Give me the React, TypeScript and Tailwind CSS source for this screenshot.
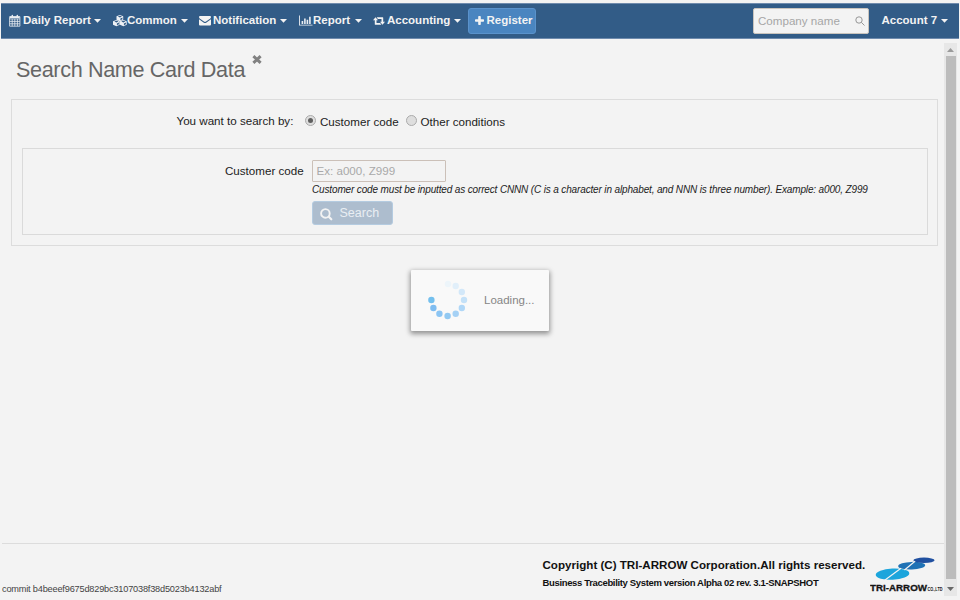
import React from "react";

type Shape = { className?: string };

function Caret({ className = "" }: Shape) {
  return (
    <svg className={className} width="7" height="4" viewBox="0 0 7 4" fill="#f3f3f3">
      <path d="M0 0h7L3.5 3.8z" />
    </svg>
  );
}

function CalendarIcon() {
  return (
    <svg width="12" height="13" viewBox="0 0 12 13" fill="none" stroke="#e9edf2" strokeWidth="0.8">
      <path d="M.6 2.6h10.3v9.6H.6zM.6 4.9h10.3M.6 7.4h10.3M.6 9.8h10.3M3.2 4.9v7.3M5.8 4.9v7.3M8.4 4.9v7.3" />
      <path d="M1 3.2h9.6" strokeWidth="1.6" />
      <path d="M3.3 1.4v1.8M8.3 1.4v1.8" strokeWidth="1.5" strokeLinecap="round" />
    </svg>
  );
}

function Cube({ x, y }: { x: number; y: number }) {
  return (
    <g transform={`translate(${x} ${y})`}>
      <path d="M3.4 0L6.7 1.3v3.4L3.4 6.2 0 4.7V1.3z" fill="#eef1f5" />
      <path d="M1.3 1.6l2.1-.8 2.1.8-2.1.8zM3.9 3.5l2-.9v1.7l-2 .9z" fill="#325c87" />
    </g>
  );
}

function CubesIcon() {
  return (
    <svg width="14" height="13" viewBox="0 0 14 13">
      <Cube x={3.5} y={1} />
      <Cube x={0} y={6} />
      <Cube x={7} y={6} />
    </svg>
  );
}

function EnvelopeIcon() {
  return (
    <svg className="mt-px" width="12" height="10" viewBox="0 0 12 10" fill="#f3f3f3">
      <path d="M0 1Q0 0 1 0h10q1 0 1 1 0 1-1 1.8L7 5.6q-1 .7-2 0L1 2.8Q0 2 0 1z" />
      <path d="M0 3.2L4.5 6.4q1.5 1 3 0L12 3.2V8.4q0 1.1-1 1.1H1q-1 0-1-1.1z" />
    </svg>
  );
}

function ChartIcon() {
  return (
    <svg className="mt-px" width="14" height="12" viewBox="0 0 14 12" fill="#e9edf2">
      <path d="M0 .5h.9v9.2H13.5v.9H0z" />
      <path d="M2.6 6h1.6v3.1H2.6zM5.1 3.4h1.6v5.7H5.1zM7.6 4.8h1.6v4.3H7.6zM10.1 1.8h1.6v7.3h-1.6z" />
    </svg>
  );
}

function RetweetIcon() {
  return (
    <svg className="mt-px" width="12" height="8" viewBox="0 0 12 8" fill="#f3f3f3">
      <path d="M2.5 0.2L5 3.2H3.5v2.7h3.6L8.4 7.7H2.3q-.5 0-.5-.5v-4H0z" />
      <path d="M9.5 7.7L7 4.7h1.5V2H4.9L3.6.2h6.1q.5 0 .5.5v4H12z" />
    </svg>
  );
}

function PlusIcon() {
  return (
    <svg width="9" height="9" viewBox="0 0 9 9" fill="#f3f3f3">
      <path d="M3.2.7q0-.7.7-.7h1.2q.7 0 .7.7v2.5h2.5q.7 0 .7.7v1.2q0 .7-.7.7H5.8v2.5q0 .7-.7.7H3.9q-.7 0-.7-.7V5.8H.7Q0 5.8 0 5.1V3.9q0-.7.7-.7h2.5z" />
    </svg>
  );
}

type ItemProps = {
  icon: React.ReactNode;
  label: string;
  width: string;
  iconWidth: string;
  labelWidth: string;
};

function NavItem({ icon, label, width, iconWidth, labelWidth }: ItemProps) {
  return (
    <div className={`flex items-center ${width}`}>
      <span className={`shrink-0 ${iconWidth}`}>{icon}</span>
      <span className={`shrink-0 whitespace-nowrap ${labelWidth}`}>{label}</span>
      <Caret />
    </div>
  );
}

function Header() {
  return (
    <header className="mx-px mt-[3px] flex h-9 items-center border-y border-[#6f8bad] bg-[#325c87] pb-px pl-2 text-[11.5px] font-bold text-[#f3f3f3]">
      <NavItem icon={<CalendarIcon />} label="Daily Report" width="w-[104px]" iconWidth="w-[14px]" labelWidth="w-[71px]" />
      <NavItem icon={<CubesIcon />} label="Common" width="w-[86px]" iconWidth="w-[14px]" labelWidth="w-[54px]" />
      <NavItem icon={<EnvelopeIcon />} label="Notification" width="w-[100px]" iconWidth="w-[14px]" labelWidth="w-[67px]" />
      <NavItem icon={<ChartIcon />} label="Report" width="w-[74px]" iconWidth="w-[14px]" labelWidth="w-[42px]" />
      <NavItem icon={<RetweetIcon />} label="Accounting" width="w-[95px]" iconWidth="w-[14px]" labelWidth="w-[67px]" />
      <button className="mt-px flex h-[26px] w-[68px] items-center gap-[3px] rounded-[3px] border border-[#5a92cb] bg-[#4a85c0] pl-[5.5px] pb-px">
        <PlusIcon />
        <span>Register</span>
      </button>
      <div className="mt-px ml-[217px] flex h-[26px] w-[115.5px] items-center justify-between rounded-[2px] border border-[#c9c4bd] bg-[#f3f3f3] pr-[3px] pl-1 text-[11.6px] font-normal text-[#a6a6a6]">
        <span>Company name</span>
        <svg width="10" height="10" viewBox="0 0 10 10" fill="none" stroke="#8c8c8c" strokeWidth="0.9">
          <circle cx="4" cy="4" r="3.2" />
          <path d="M6.4 6.4L9.5 9.5" />
        </svg>
      </div>
      <span className="ml-[13px] w-[59.5px] whitespace-nowrap">Account 7</span>
      <Caret />
    </header>
  );
}

function Radio({ checked }: { checked?: boolean }) {
  return (
    <span className="mb-[3px] flex size-[11px] shrink-0 items-center justify-center rounded-full border border-[#ababab] bg-[#dedede]">
      {checked && <span className="size-[5px] rounded-full bg-[#5f5f5f]" />}
    </span>
  );
}

function SearchPanel() {
  return (
    <section className="mt-[15px] ml-[11px] h-[147px] w-[927px] border border-[#dcdcdc] px-[10px] text-[11.6px] text-[#222]">
      <div className="flex h-[48px] items-center pb-[5px]">
        <span className="mb-px ml-[154.5px] w-[128.5px] whitespace-nowrap">You want to search by:</span>
        <Radio checked />
        <span className="mt-px ml-[4px] w-[86px] whitespace-nowrap">Customer code</span>
        <Radio />
        <span className="mt-px ml-[3.5px] whitespace-nowrap">Other conditions</span>
      </div>
      <div className="h-[87px] w-[906px] border border-[#dadada] pt-[11px]">
        <div className="flex h-[22px] items-center">
          <span className="ml-[202px] w-[87px] whitespace-nowrap">Customer code</span>
          <div className="flex h-[22px] w-[134px] items-center rounded-[1px] border border-[#cbc0b8] pl-[3.5px] text-[#a9a9a9]">
            Ex: a000, Z999
          </div>
        </div>
        <p className="ml-[289px] h-[19px] pt-px text-[10px] leading-[13px] tracking-[-0.145px] whitespace-nowrap italic">
          Customer code must be inputted as correct CNNN (C is a character in alphabet, and NNN is three number). Example: a000, Z999
        </p>
        <button className="ml-[289px] flex h-6 w-[81px] items-center rounded-[3px] border border-[#b4cbe0] bg-[#adbdce] pl-[7px] text-[12.5px] text-[#e9eef3]">
          <svg className="mt-0.5 mr-[6.5px]" width="13" height="13" viewBox="0 0 13 13" fill="none" stroke="#f3f3f3">
            <circle cx="5.4" cy="5.4" r="4.3" strokeWidth="1.9" />
            <path d="M8.8 8.8l2.5 2.5" strokeWidth="2.2" strokeLinecap="round" />
          </svg>
          Search
        </button>
      </div>
    </section>
  );
}

const DOTS: [number, number, string][] = [
  [4.4, 20, "#74c0ee"],
  [6.4, 28, "#7fbdf1"],
  [12.4, 33.8, "#8cc5f3"],
  [20.6, 36, "#92c9f2"],
  [28.7, 33.8, "#a5d1f5"],
  [34.8, 28, "#b0d7f7"],
  [37, 20, "#c4e1f8"],
  [34.8, 12, "#d3e8f9"],
  [28.7, 6, "#e1effa"],
  [21, 4, "#edf5fa"],
];

function LoadingBox() {
  return (
    <div className="absolute top-[270px] left-[411px] flex h-[61px] w-[138px] items-center rounded-[1px] bg-[#f9f9f9] pl-4 text-[11.5px] text-[#868686] shadow-[0_2px_5px_1px_rgba(0,0,0,0.4)]">
      <svg className="shrink-0" width="41" height="41" viewBox="0 0 41 41">
        {DOTS.map(([x, y, fill]) => (
          <circle key={`${x}-${y}`} cx={x} cy={y} r="3.2" fill={fill} />
        ))}
      </svg>
      <span className="ml-4">Loading...</span>
    </div>
  );
}

function Logo() {
  return (
    <svg width="74" height="38" viewBox="0 0 74 38">
      <ellipse cx="22.5" cy="18.2" rx="16.8" ry="5.6" fill="#1ca5dc" transform="rotate(-3 22.5 18.2)" />
      <ellipse cx="41.7" cy="9.7" rx="13.5" ry="3.8" fill="#1f72b5" transform="rotate(-2 41.7 9.7)" />
      <ellipse cx="54" cy="4.3" rx="10.6" ry="2.7" fill="#2050a0" />
      <path d="M14 24.8L31 12.2M34.5 14L45 5.2" stroke="#f3f3f3" strokeWidth="1.2" />
      <text x="0" y="34.5" fontSize="9.6" fontWeight="bold" fontFamily="Liberation Sans, sans-serif" textLength="57" lengthAdjust="spacingAndGlyphs" fill="#151515" stroke="#151515" strokeWidth="0.3">TRI-ARROW</text>
      <text x="57.5" y="34.5" fontSize="4.8" fontWeight="bold" fontFamily="Liberation Sans, sans-serif" textLength="15" lengthAdjust="spacingAndGlyphs" fill="#151515">CO.,LTD</text>
    </svg>
  );
}

function Footer() {
  return (
    <footer className="mt-auto ml-[2px] flex h-[57px] w-[942px] border-t border-[#dcdcdc] text-[#111]">
      <span className="mt-[38px] w-[540.5px] text-[9.2px] leading-[14px] tracking-[-0.19px] text-[#444]">commit b4beeef9675d829bc3107038f38d5023b4132abf</span>
      <div className="mt-[13px] w-[327.5px] font-bold whitespace-nowrap">
        <p className="text-[11.6px] leading-4">Copyright (C) TRI-ARROW Corporation.All rights reserved.</p>
        <p className="mt-[2px] text-[9.5px] leading-4 tracking-[-0.345px]">Business Tracebility System version Alpha 02 rev. 3.1-SNAPSHOT</p>
      </div>
      <div className="mt-[12px] shrink-0">
        <Logo />
      </div>
    </footer>
  );
}

function Scrollbar() {
  return (
    <div className="mt-1 flex h-[553px] w-[13px] flex-col items-center bg-[#e7e7e7] pt-[5px]">
      <svg className="shrink-0" width="7" height="4" viewBox="0 0 7 4" fill="#9b9b9b">
        <path d="M0 4L3.5 0 7 4z" />
      </svg>
      <div className="mt-1 h-[523px] w-[10px] shrink-0 bg-[#bcbcbc]" />
      <svg className="mt-2 shrink-0" width="7" height="4" viewBox="0 0 7 4" fill="#686868">
        <path d="M0 0h7L3.5 4z" />
      </svg>
    </div>
  );
}

export default function App() {
  return (
    <div className="relative flex h-[600px] w-[960px] flex-col overflow-hidden bg-[#f3f3f3] font-['Liberation_Sans',Arial,sans-serif]">
      <Header />
      <div className="flex min-h-0 flex-1">
        <main className="flex w-[944px] flex-col">
          <div className="flex h-[45px] pl-4">
            <h1 className="mt-[17px] w-[235.5px] text-[21.6px] leading-7 tracking-[-0.35px] whitespace-nowrap text-[#666]">Search Name Card Data</h1>
            <svg className="mt-4" width="10" height="9" viewBox="0 0 10 9" stroke="#818181" strokeWidth="3">
              <path d="M1.4 1.2l7.2 6.6M8.6 1.2L1.4 7.8" />
            </svg>
          </div>
          <SearchPanel />
          <Footer />
        </main>
        <Scrollbar />
      </div>
      <LoadingBox />
    </div>
  );
}
